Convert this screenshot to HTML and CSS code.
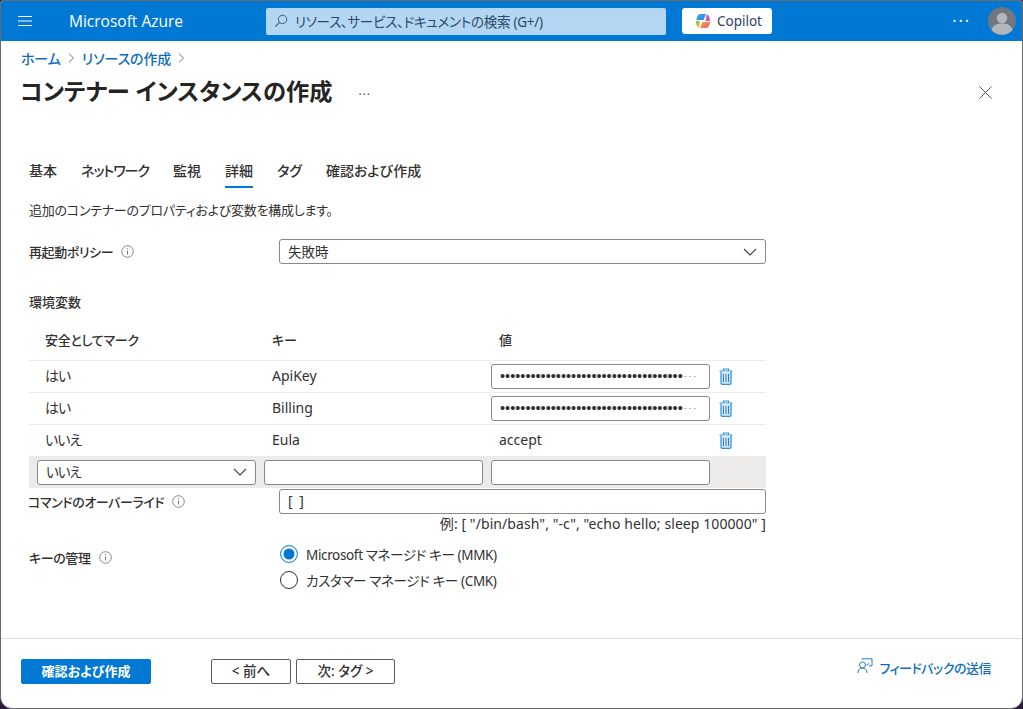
FILE: index.html
```html
<!DOCTYPE html>
<html lang="ja">
<head>
  <meta charset="UTF-8" />
  <meta name="viewport" content="width=device-width, initial-scale=1.0"/>
  <title>コンテナー インスタンスの作成 - Microsoft Azure</title>
  <link rel="stylesheet" href="styles.css">
</head>
<body>
  <div class="window">
    <header class="topbar">
      <button class="menu-btn" aria-label="メニュー">
        <svg width="16" height="12" viewBox="0 0 16 12"><path d="M1 1.500h14M1 6h14M1 10.500h14" stroke="#fff" stroke-width="1"/></svg>
      </button>
      <div class="brand">Microsoft Azure</div>
      <div class="search">
        <svg width="14" height="14" viewBox="0 0 14 14" fill="none"><circle cx="8.600" cy="5.400" r="4.200" stroke="#33618f" stroke-width="1"/><path d="M5.500 8.500L1.300 12.700" stroke="#33618f" stroke-width="1.100"/></svg>
        <span>リソース、サービス、ドキュメントの検索 (G+/)</span>
      </div>
      <button class="copilot">
        <svg width="16" height="16" viewBox="0 0 16 16">
          <defs>
            <linearGradient id="cpA" x1="0" y1="0" x2="1" y2="1"><stop offset="0" stop-color="#2bb3e8"/><stop offset="1" stop-color="#3a7be0"/></linearGradient>
            <linearGradient id="cpB" x1="0" y1="0" x2="1" y2="1"><stop offset="0" stop-color="#7fc241"/><stop offset="1" stop-color="#f2b632"/></linearGradient>
            <linearGradient id="cpC" x1="0" y1="0" x2="1" y2="1"><stop offset="0" stop-color="#b05be0"/><stop offset="1" stop-color="#f0568a"/></linearGradient>
            <linearGradient id="cpD" x1="0" y1="0" x2="1" y2="1"><stop offset="0" stop-color="#f7a33c"/><stop offset="1" stop-color="#ee5a6f"/></linearGradient>
          </defs>
          <path d="M5 1h6l-2.500 6H1.500C1.800 3.500 3 1 5 1z" fill="url(#cpA)"/>
          <path d="M1 8h4L3.800 14.500C2 14 .8 11 1 8z" fill="url(#cpB)"/>
          <path d="M11.800 1.200C14 2 15 4.500 15 8h-4.500z" fill="url(#cpC)"/>
          <path d="M7.500 9H15c-.3 3-1.700 6-4 6H5z" fill="url(#cpD)"/>
        </svg>
        <span>Copilot</span>
      </button>
      <div class="top-more">&middot;&middot;&middot;</div>
      <div class="avatar">
        <svg width="28" height="28" viewBox="0 0 28 28"><circle cx="14" cy="14" r="14" fill="#6f7780"/><circle cx="14" cy="11" r="5.300" fill="#b3b6ba"/><path d="M3.500 23c1-4.500 5-6.500 10.500-6.500S23.500 18.500 24.500 23a14 14 0 0 1-21 0z" fill="#b3b6ba"/></svg>
      </div>
    </header>

    <main class="page">
      <nav class="breadcrumb">
        <a>ホーム</a>
        <svg class="crumb-sep" width="7" height="10" viewBox="0 0 7 10" fill="none"><path d="M1 .8L5.500 5 1 9.200" stroke="#7a7a7a"/></svg>
        <a>リソースの作成</a>
        <svg class="crumb-sep" width="7" height="10" viewBox="0 0 7 10" fill="none"><path d="M1 .8L5.500 5 1 9.200" stroke="#7a7a7a"/></svg>
      </nav>

      <div class="title-row">
        <h1>コンテナー インスタンスの作成</h1>
        <span class="title-more">&middot;&middot;&middot;</span>
        <svg class="close" width="13" height="13" viewBox="0 0 13 13"><path d="M.5.500l12 12M12.500.500l-12 12" stroke="#555" stroke-width="1"/></svg>
      </div>

      <div class="tabs">
        <span class="tab">基本</span>
        <span class="tab tight">ネットワーク</span>
        <span class="tab">監視</span>
        <span class="tab active">詳細</span>
        <span class="tab">タグ</span>
        <span class="tab">確認および作成</span>
      </div>

      <p class="intro">追加のコンテナーのプロパティおよび変数を構成します。</p>

      <div class="form-row restart-row">
        <div class="form-label">再起動ポリシー <svg class="info" width="13" height="13" viewBox="0 0 13 13" fill="none"><use href="#info-icon"/></svg></div>
        <div class="select wide">
          <span>失敗時</span>
          <svg width="14" height="8" viewBox="0 0 14 8" fill="none"><path d="M1 1l6 6 6-6" stroke="#444" stroke-width="1.100"/></svg>
        </div>
      </div>

      <h2 class="env-title">環境変数</h2>

      <div class="env-table">
        <div class="env-row env-head">
          <div>安全としてマーク</div><div>キー</div><div>値</div><div></div>
        </div>
        <div class="env-row">
          <div>はい</div><div>ApiKey</div>
          <div class="input secret"><span>&bull;&bull;&bull;&bull;&bull;&bull;&bull;&bull;&bull;&bull;&bull;&bull;&bull;&bull;&bull;&bull;&bull;&bull;&bull;&bull;&bull;&bull;&bull;&bull;&bull;&bull;&bull;&bull;&bull;&bull;&bull;&bull;&bull;&bull;&bull;&bull;</span><span class="more-dots">&middot;&middot;&middot;</span></div>
          <svg class="trash" width="14" height="17" viewBox="0 0 14 17" fill="none"><use href="#trash-icon"/></svg>
        </div>
        <div class="env-row">
          <div>はい</div><div>Billing</div>
          <div class="input secret"><span>&bull;&bull;&bull;&bull;&bull;&bull;&bull;&bull;&bull;&bull;&bull;&bull;&bull;&bull;&bull;&bull;&bull;&bull;&bull;&bull;&bull;&bull;&bull;&bull;&bull;&bull;&bull;&bull;&bull;&bull;&bull;&bull;&bull;&bull;&bull;&bull;</span><span class="more-dots">&middot;&middot;&middot;</span></div>
          <svg class="trash" width="14" height="17" viewBox="0 0 14 17" fill="none"><use href="#trash-icon"/></svg>
        </div>
        <div class="env-row">
          <div>いいえ</div><div>Eula</div><div>accept</div>
          <svg class="trash" width="14" height="17" viewBox="0 0 14 17" fill="none"><use href="#trash-icon"/></svg>
        </div>
        <div class="env-new">
          <div class="select">
            <span>いいえ</span>
            <svg width="14" height="8" viewBox="0 0 14 8" fill="none"><path d="M1 1l6 6 6-6" stroke="#444" stroke-width="1.100"/></svg>
          </div>
          <div class="input"></div>
          <div class="input"></div>
        </div>
      </div>

      <div class="form-row command-row">
        <div class="form-label">コマンドのオーバーライド <svg class="info" width="13" height="13" viewBox="0 0 13 13" fill="none"><use href="#info-icon"/></svg></div>
        <div class="command-field">
          <div class="input wide-input">[ ]</div>
          <div class="hint">例: [ "/bin/bash", "-c", "echo hello; sleep 100000" ]</div>
        </div>
      </div>

      <div class="form-row key-row">
        <div class="form-label">キーの管理 <svg class="info" width="13" height="13" viewBox="0 0 13 13" fill="none"><use href="#info-icon"/></svg></div>
        <div class="radios">
          <div class="radio-item"><span class="radio checked"></span><span>Microsoft マネージド キー (MMK)</span></div>
          <div class="radio-item"><span class="radio"></span><span>カスタマー マネージド キー (CMK)</span></div>
        </div>
      </div>
    </main>

    <footer class="footer">
      <button class="btn primary">確認および作成</button>
      <button class="btn prev">&lt; 前へ</button>
      <button class="btn next">次: タグ &gt;</button>
      <a class="feedback">
        <svg width="16" height="16" viewBox="0 0 16 16" fill="none"><path d="M5 1.500V.8h10v7h-3" stroke="#0f6cbd" stroke-width=".9"/><circle cx="5.500" cy="7" r="3" stroke="#0f6cbd" stroke-width=".9"/><path d="M.8 15c.3-3 2-5 4.700-5s4.400 2 4.700 5M9.500 7l2.500-1.500" stroke="#0f6cbd" stroke-width=".9"/></svg>
        <span>フィードバックの送信</span>
      </a>
    </footer>
  </div>

  <svg class="icon-defs" width="0" height="0">
    <symbol id="info-icon" viewBox="0 0 13 13">
      <circle cx="6.500" cy="6.500" r="5.800" stroke="#7a7a7a" stroke-width=".9" fill="none"/>
      <path d="M6.500 5.500v4" stroke="#7a7a7a" stroke-width="1"/><circle cx="6.500" cy="3.600" r=".7" fill="#7a7a7a"/>
    </symbol>
    <symbol id="trash-icon" viewBox="0 0 14 17">
      <path d="M.5 3h13M4.500 3V1h5v2" stroke="#2f8fe0" stroke-width="1.100" fill="none"/>
      <path d="M2 3.500V15c0 .8.500 1.300 1.200 1.300h7.600c.7 0 1.200-.5 1.200-1.300V3.500" stroke="#2f8fe0" stroke-width="1.200" fill="#cfe6f8"/>
      <path d="M4.500 6v8M7 6v8M9.500 6v8" stroke="#2f7fc8" stroke-width="1"/>
    </symbol>
  </svg>
</body>
</html>
```

FILE: styles.css
```css
* {
  box-sizing: border-box;
}
html, body {
  height: 100%;
}
body {
  margin: 0;
  background: #2a1a3a;
  overflow: hidden;
  font-family: "Noto Sans", "Noto Sans CJK JP", sans-serif;
  font-size: 14px;
  font-feature-settings: "palt";
  color: #323130;
}
button {
  font-family: inherit;
  font-feature-settings: inherit;
}
.window {
  height: 709px;
  display: flex;
  flex-direction: column;
  background: #fff;
  border: 1px solid #6a6a6a;
  border-radius: 3px 3px 12px 12px;
  overflow: hidden;
}
.icon-defs {
  display: none;
}

/* top bar */
.topbar {
  height: 40px;
  flex: none;
  display: flex;
  align-items: center;
  background: #0078d4;
  color: #fff;
}
.menu-btn {
  background: none;
  border: 0;
  padding: 0;
  margin-left: 16px;
  display: flex;
}
.brand {
  margin-left: 36px;
  width: 197px;
  font-size: 15.500px;
  font-family: "Open Sans", sans-serif;
  font-weight: 500;
}
.search {
  width: 400px;
  height: 27px;
  display: flex;
  align-items: center;
  gap: 7px;
  padding-left: 8px;
  background: #b3d6f2;
  border-radius: 2px;
  color: #2a4a68;
  font-size: 13.500px;
  letter-spacing: -0.25px;
}
.copilot {
  margin-left: 16px;
  width: 90px;
  height: 26px;
  display: flex;
  align-items: center;
  justify-content: center;
  gap: 6px;
  padding-right: 3px;
  background: #fff;
  border: 0;
  border-radius: 3px;
  color: #2d3f66;
  font-size: 13.500px;
}
.top-more {
  margin-left: auto;
  font-size: 16px;
  letter-spacing: 2px;
}
.avatar {
  margin-left: 17px;
  margin-right: 6px;
  display: flex;
}

/* page body */
.page {
  flex: 1;
  padding: 0 0 0 20px;
}
.breadcrumb {
  display: flex;
  align-items: center;
  gap: 7px;
  height: 20px;
  margin-top: 7px;
  color: #0f6cbd;
  font-size: 14px;
  font-weight: 500;
  letter-spacing: -0.1px;
}
.title-row {
  display: flex;
  align-items: center;
  height: 36px;
  margin-top: 4px;
  padding-right: 30px;
  margin-left: -1px;
}
h1 {
  margin: 0;
  font-size: 23.250px;
  font-weight: 700;
  color: #242424;
}
.title-more {
  margin-left: 26px;
  margin-top: 8px;
  color: #555;
  font-size: 12px;
  letter-spacing: 1px;
}
.close {
  margin-left: auto;
  margin-top: 4px;
}
.tabs {
  display: flex;
  gap: 24px;
  margin: 52px 0 0 8px;
  font-size: 14px;
  font-weight: 500;
}
.tab {
  padding-bottom: 6px;
  height: 28px;
  line-height: 21px;
}
.tab.tight {
  letter-spacing: -1px;
}
.tab.active {
  border-bottom: 2px solid #0078d4;
}
.intro {
  margin: 13px 0 0 8px;
  font-size: 13px;
  line-height: 18px;
  letter-spacing: -0.25px;
}
.form-row {
  display: flex;
  margin-left: 8px;
  width: 737px;
}
.form-label {
  width: 250px;
  flex: none;
  display: flex;
  align-items: center;
  gap: 3px;
  font-size: 13px;
  font-weight: 500;
  letter-spacing: -0.4px;
}
.info {
  margin-left: 5px;
}
.restart-row {
  margin-top: 20px;
  height: 25px;
}
.select, .input {
  height: 25px;
  background: #fff;
  border: 1px solid #8a8886;
  border-radius: 3px;
  display: flex;
  align-items: center;
}
.select {
  justify-content: space-between;
  padding: 0 8px 2px;
  font-size: 13.500px;
}
.select svg {
  margin-top: 2px;
}
.select.wide {
  flex: 1;
}
.input {
  padding: 0 8px 2px;
}
.env-title {
  margin: 29px 0 0 8px;
  font-size: 13px;
  font-weight: 500;
  line-height: 18px;
}

/* env table */
.env-table {
  margin: 16px 0 0 8px;
  width: 737px;
}
.env-row {
  display: grid;
  grid-template-columns: 227px 227px 219px 1fr;
  align-items: center;
  height: 32px;
  padding-left: 16px;
  border-top: 1px solid #edebe9;
  font-size: 14px;
}
.env-row > div:not(.input) {
  padding-bottom: 3px;
}
.env-row > div:first-child {
  letter-spacing: -1px;
}
.env-head {
  height: 33px;
  padding-bottom: 6px;
  border-top: 0;
  font-weight: 500;
  font-size: 13px;
}
.env-head > div:first-child {
  letter-spacing: -0.3px;
}
.env-row .input {
  margin-left: -8px;
  width: 219px;
  height: 25px;
}
.secret {
  overflow: hidden;
  white-space: nowrap;
  font-size: 14.500px;
  font-family: "Liberation Sans", sans-serif;
}
.more-dots {
  margin-left: 1px;
  font-size: 9px;
  letter-spacing: 1.800px;
  color: #666;
}
.trash {
  margin-left: 1px;
}
.env-new {
  display: grid;
  grid-template-columns: 219px 219px 219px;
  gap: 8px;
  align-items: center;
  height: 32px;
  padding-left: 8px;
  background: #edebe9;
}
.env-new .select span {
  letter-spacing: -1px;
}

.command-row {
  margin-left: 7px;
  width: 738px;
  margin-top: 1px;
}
.command-row .form-label {
  width: 251px;
  height: 25px;
}
.command-field {
  flex: 1;
}
.wide-input {
  font-size: 14px;
  padding-left: 8px;
  white-space: pre;
  word-spacing: 3px;
}
.hint {
  text-align: right;
  font-size: 14px;
  line-height: 18px;
  margin-top: 1px;
  letter-spacing: 0.08px;
}
.key-row {
  margin-top: 11px;
  align-items: flex-start;
}
.key-row .form-label {
  height: 20px;
  margin-top: 3px;
}
.radios {
  display: flex;
  flex-direction: column;
  gap: 6px;
}
.radio-item {
  display: flex;
  align-items: center;
  gap: 8px;
  height: 20px;
  font-size: 13.500px;
  letter-spacing: -0.35px;
}
.radio {
  width: 18px;
  height: 18px;
  margin-left: 1px;
  border-radius: 50%;
  border: 1px solid #323130;
  background: #fff;
}
.radio.checked {
  border: 1.500px solid #2f8fe0;
  box-shadow: inset 0 0 0 2.500px #fff;
  background: #0078d4;
}

/* footer */
.footer {
  flex: none;
  height: 70px;
  display: flex;
  align-items: center;
  padding: 0 31px 5px 20px;
  border-top: 1px solid #e1dfdd;
}
.btn {
  height: 25px;
  border-radius: 2px;
  font-size: 13.500px;
  font-weight: 500;
  background: #fff;
  border: 1px solid #605e5c;
  color: #323130;
  padding: 0 0 2px;
}
.btn.primary {
  width: 130px;
  background: #0078d4;
  border-color: #0078d4;
  color: #fff;
  font-weight: 700;
  font-size: 13px;
}
.btn.prev {
  width: 80px;
  margin-left: 60px;
}
.btn.next {
  width: 99px;
  margin-left: 5px;
}
.feedback {
  margin-left: auto;
  margin-top: -8px;
  display: flex;
  align-items: center;
  gap: 7px;
  color: #0f6cbd;
  font-size: 13px;
  font-weight: 500;
  letter-spacing: -0.5px;
}
.feedback svg {
  margin-top: -3px;
}
```
